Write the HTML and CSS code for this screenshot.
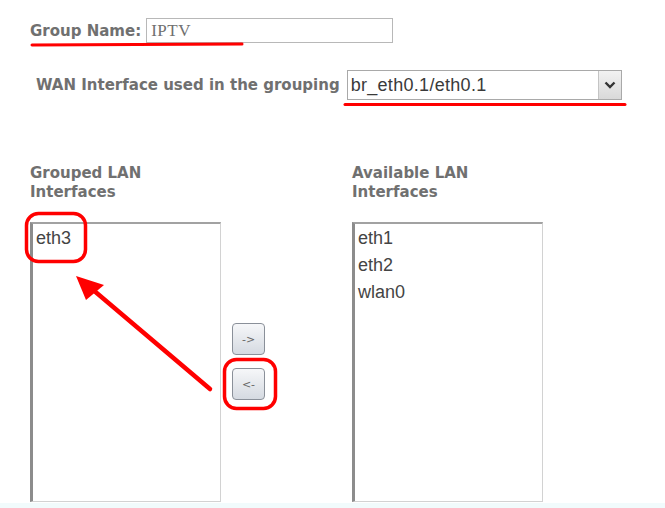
FILE: index.html
```html
<!DOCTYPE html>
<html lang="en">

<head>
    <meta charset="UTF-8">
    <meta name="viewport" content="width=device-width, initial-scale=1.0">
    <title>Interface Grouping</title>
    <link rel="stylesheet" href="styles.css">
</head>

<body>
    <div class="pagina">
        <div class="linha-nome">
            <span class="rotulo">Group Name:</span>
            <div class="campo-texto">IPTV</div>
        </div>

        <div class="linha-wan">
            <span class="rotulo">WAN Interface used in the grouping</span>
            <div class="seletor">
                <span class="seletor-valor">br_eth0.1/eth0.1</span>
                <span class="seletor-seta">
                    <svg width="12" height="8" viewBox="0 0 12 8">
                        <path d="M1.5 1.5 L6 6 L10.5 1.5" fill="none" stroke="#333" stroke-width="2.4" />
                    </svg>
                </span>
            </div>
        </div>

        <div class="listas">
            <div class="coluna">
                <div class="rotulo titulo-lista">Grouped LAN<br>Interfaces</div>
                <div class="caixa-lista">
                    <div class="item">eth3</div>
                </div>
            </div>

            <div class="botoes">
                <button class="botao">-&gt;</button>
                <button class="botao">&lt;-</button>
            </div>

            <div class="coluna">
                <div class="rotulo titulo-lista">Available LAN<br>Interfaces</div>
                <div class="caixa-lista">
                    <div class="item">eth1</div>
                    <div class="item">eth2</div>
                    <div class="item">wlan0</div>
                </div>
            </div>
        </div>
        <div class="faixa"></div>

        <!-- marcas em vermelho por cima da tela -->
        <svg class="anotacoes" width="665" height="508" viewBox="0 0 665 508">
            <g stroke="#f00" fill="none" stroke-linecap="round" stroke-linejoin="round">
                <path d="M32 45 L242 44" stroke-width="3" />
                <path d="M345 104.5 L625 104.5" stroke-width="3" />
                <rect x="26.5" y="213.5" width="59" height="48" rx="12" stroke-width="3.5" />
                <rect x="224.5" y="359.5" width="51" height="49" rx="12" stroke-width="3.5" />
                <path d="M210 389 L92 289" stroke-width="4.5" />
            </g>
            <polygon points="76,276 86,300 104,285" fill="#f00" />
        </svg>
    </div>
</body>

</html>
```

FILE: styles.css
```css
body {
    margin: 0;
    background-color: #fff;
    font-family: "DejaVu Sans", Verdana, sans-serif;
}

.pagina {
    position: relative;
    width: 665px;
    height: 508px;
    padding: 18px 0 0 30px;
    box-sizing: border-box;
    overflow: hidden;
}

.rotulo {
    font-size: 15px;
    font-weight: bold;
    color: #707070;
}

.linha-nome {
    display: flex;
    align-items: center;
    gap: 5px;
}

.campo-texto {
    width: 247px;
    height: 25px;
    box-sizing: border-box;
    padding: 1px 4px 0;
    border: 1px solid #b8b8b8;
    font-family: "Liberation Serif", "Times New Roman", serif;
    font-size: 17px;
    letter-spacing: 0.5px;
    line-height: 22px;
    color: #707070;
}

.linha-wan {
    display: flex;
    align-items: center;
    gap: 7px;
    margin-top: 27px;
    padding-left: 6px;
}

.seletor {
    display: flex;
    width: 275px;
    height: 30px;
    box-sizing: border-box;
    border: 1px solid #a9a9a9;
}

.seletor-valor {
    flex: 1;
    padding-left: 3px;
    font-family: "Liberation Sans", Arial, sans-serif;
    font-size: 18px;
    letter-spacing: 0.3px;
    line-height: 28px;
    color: #3a3a3a;
}

.seletor-seta {
    width: 22px;
    display: flex;
    justify-content: center;
    align-items: center;
    border-left: 1px solid #c4c4c4;
    background: linear-gradient(#f2f2f2, #d9d9d9);
}

.listas {
    display: flex;
    margin-top: 64px;
}

.coluna {
    width: 191px;
}

.titulo-lista {
    line-height: 19px;
    margin-bottom: 20px;
}

.caixa-lista {
    height: 280px;
    box-sizing: border-box;
    padding: 1px 0 0 3px;
    border-top: 2px solid #a2a2a2;
    border-left: 3px solid #8c8c8c;
    border-right: 1px solid #d2d2d2;
    border-bottom: 1px solid #d2d2d2;
}

.item {
    font-family: "Liberation Sans", Arial, sans-serif;
    font-size: 18px;
    line-height: 27px;
    color: #444;
}

.botoes {
    width: 131px;
    padding: 159px 0 0 11px;
    box-sizing: border-box;
    display: flex;
    flex-direction: column;
    align-items: flex-start;
    gap: 13px;
}

.botao {
    width: 33px;
    height: 32px;
    padding: 0;
    border: 1px solid #8a9099;
    border-radius: 4px;
    background: linear-gradient(#f6f7f9, #d5dae1);
    font-family: "DejaVu Sans", Verdana, sans-serif;
    font-size: 11px;
    color: #666;
}

.faixa {
    height: 8px;
    margin: 1px 0 0 -30px;
    background-color: #f1fbfc;
}

.anotacoes {
    position: absolute;
    top: 0;
    left: 0;
    pointer-events: none;
}
```
